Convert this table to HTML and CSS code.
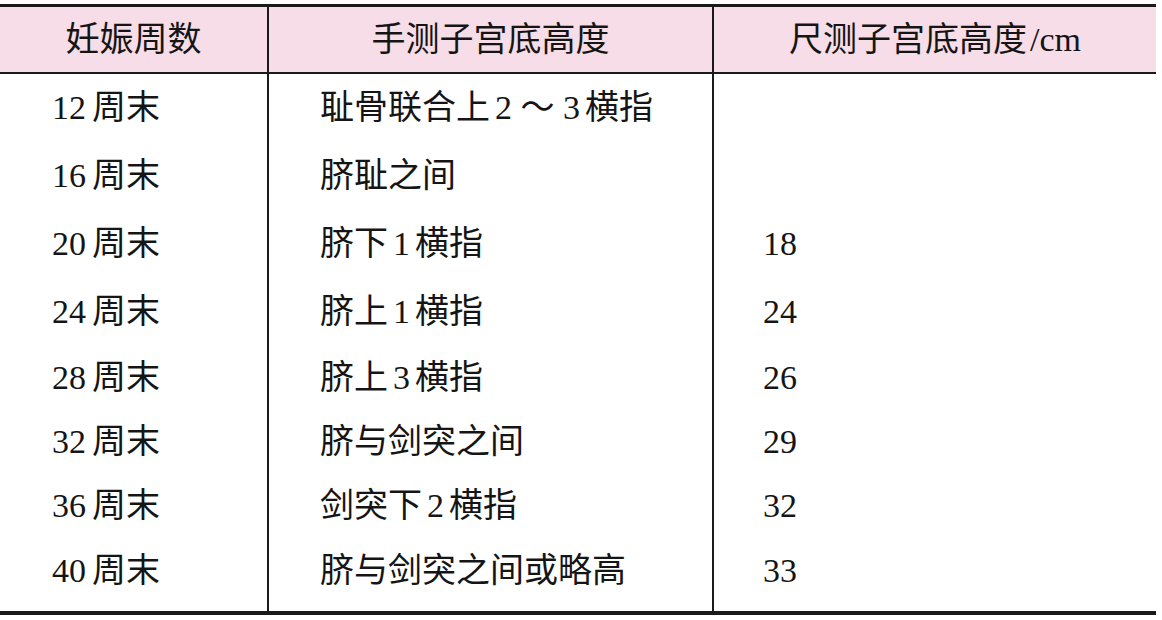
FILE: index.html
```html
<!DOCTYPE html>
<html lang="zh">
<head>
<meta charset="utf-8">
<title>子宫底高度</title>
<link rel="stylesheet" href="styles.css">
</head>
<body>
<table class="fundus">
  <colgroup>
    <col class="c1">
    <col class="c2">
    <col class="c3">
  </colgroup>
  <thead>
    <tr>
      <th>妊娠周数</th>
      <th class="sep">手测子宫底高度</th>
      <th class="sep">尺测子宫底高度<span class="unit">/cm</span></th>
    </tr>
  </thead>
  <tbody>
    <tr class="ra"><td class="w"><span class="wk">12</span>周末</td><td class="sep h">耻骨联合上<span class="n">2 ～ 3</span>横指</td><td class="sep m"></td></tr>
    <tr class="ra"><td class="w"><span class="wk">16</span>周末</td><td class="sep h">脐耻之间</td><td class="sep m"></td></tr>
    <tr class="ra"><td class="w"><span class="wk">20</span>周末</td><td class="sep h">脐下<span class="n">1</span>横指</td><td class="sep m">18</td></tr>
    <tr class="ra"><td class="w"><span class="wk">24</span>周末</td><td class="sep h">脐上<span class="n">1</span>横指</td><td class="sep m">24</td></tr>
    <tr class="rb"><td class="w"><span class="wk">28</span>周末</td><td class="sep h">脐上<span class="n">3</span>横指</td><td class="sep m">26</td></tr>
    <tr class="rb"><td class="w"><span class="wk">32</span>周末</td><td class="sep h">脐与剑突之间</td><td class="sep m">29</td></tr>
    <tr class="rb"><td class="w"><span class="wk">36</span>周末</td><td class="sep h">剑突下<span class="n">2</span>横指</td><td class="sep m">32</td></tr>
    <tr class="rl"><td class="w"><span class="wk">40</span>周末</td><td class="sep h">脐与剑突之间或略高</td><td class="sep m">33</td></tr>
  </tbody>
</table>
</body>
</html>
```
FILE: styles.css
```css
html, body {
  margin: 0;
  padding: 0;
  background: #ffffff;
}

body {
  padding-top: 4px;
  font-family: "Liberation Serif", "Noto Sans CJK SC", serif;
  color: #151515;
}

.fundus {
  width: 1156px;
  table-layout: fixed;
  border-collapse: separate;
  border-spacing: 0;
  border-top: 3px solid #1a1a1a;
  border-bottom: 4px solid #1a1a1a;
  font-size: 34px;
  line-height: 40px;
}

.c1 { width: 267px; }
.c2 { width: 445px; }
.c3 { width: 444px; }

.fundus th {
  height: 65px;
  padding: 0;
  background: #f7dde7;
  font-weight: normal;
  text-align: center;
  vertical-align: middle;
  border-bottom: 2px solid #1a1a1a;
}

.unit {
  margin-left: 3px;
}

.fundus td {
  padding: 0;
  text-align: left;
  vertical-align: middle;
  white-space: nowrap;
}

.fundus .sep {
  border-left: 2px solid #1a1a1a;
}

.fundus td.w { padding-left: 52px; }
.fundus td.h { padding-left: 51px; }
.fundus td.m { padding-left: 49px; }

.wk {
  margin-right: 6px;
}

.n {
  margin: 0 5px;
}

.ra td { height: 68px; }
.rb td { height: 64px; }
.rl td { height: 65px; padding-bottom: 8px; }
```
